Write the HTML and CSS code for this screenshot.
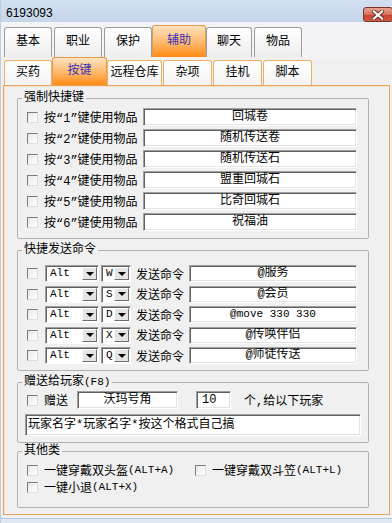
FILE: index.html
```html
<!DOCTYPE html>
<html lang="zh-CN">
<head>
    <meta charset="UTF-8">
    <meta name="viewport" content="width=device-width, initial-scale=1.0">
    <title>6193093</title>
    <link rel="stylesheet" href="styles.css">
</head>
<body>
<div class="window">
    <div class="titlebar">
        <span class="title">6193093</span>
        <span class="close">
            <svg width="12" height="10" viewBox="0 0 12 10">
                <path d="M2 1.5 L10 8.5 M10 1.5 L2 8.5" stroke="#6b2a22" stroke-width="4" stroke-linecap="square"/>
                <path d="M2 1.5 L10 8.5 M10 1.5 L2 8.5" stroke="#fff" stroke-width="2.2" stroke-linecap="square"/>
            </svg>
        </span>
    </div>

    <div class="tabs">
        <div class="tab">基本</div>
        <div class="tab">职业</div>
        <div class="tab">保护</div>
        <div class="tab active">辅助</div>
        <div class="tab">聊天</div>
        <div class="tab">物品</div>
    </div>

    <div class="subtabs">
        <div class="subtab first">买药</div>
        <div class="subtab active">按键</div>
        <div class="subtab wide">远程仓库</div>
        <div class="subtab">杂项</div>
        <div class="subtab">挂机</div>
        <div class="subtab">脚本</div>
    </div>

    <div class="panel">
        <!-- 强制快捷键 -->
        <fieldset class="group hotkeys">
            <legend>强制快捷键</legend>
            <div class="row"><span class="check"></span><span class="label">按“1”键使用物品</span><span class="field item">回城卷</span></div>
            <div class="row"><span class="check"></span><span class="label">按“2”键使用物品</span><span class="field item">随机传送卷</span></div>
            <div class="row"><span class="check"></span><span class="label">按“3”键使用物品</span><span class="field item">随机传送石</span></div>
            <div class="row"><span class="check"></span><span class="label">按“4”键使用物品</span><span class="field item">盟重回城石</span></div>
            <div class="row"><span class="check"></span><span class="label">按“5”键使用物品</span><span class="field item">比奇回城石</span></div>
            <div class="row"><span class="check"></span><span class="label">按“6”键使用物品</span><span class="field item">祝福油</span></div>
        </fieldset>

        <!-- 快捷发送命令 -->
        <fieldset class="group commands">
            <legend>快捷发送命令</legend>
            <div class="row">
                <span class="check"></span>
                <span class="combo mod">Alt<span class="drop"></span></span>
                <span class="combo key">W<span class="drop"></span></span>
                <span class="label-cmd">发送命令</span>
                <span class="field cmd">@服务</span>
            </div>
            <div class="row">
                <span class="check"></span>
                <span class="combo mod">Alt<span class="drop"></span></span>
                <span class="combo key">S<span class="drop"></span></span>
                <span class="label-cmd">发送命令</span>
                <span class="field cmd">@会员</span>
            </div>
            <div class="row">
                <span class="check"></span>
                <span class="combo mod">Alt<span class="drop"></span></span>
                <span class="combo key">D<span class="drop"></span></span>
                <span class="label-cmd">发送命令</span>
                <span class="field cmd small">@move 330 330</span>
            </div>
            <div class="row">
                <span class="check"></span>
                <span class="combo mod">Alt<span class="drop"></span></span>
                <span class="combo key">X<span class="drop"></span></span>
                <span class="label-cmd">发送命令</span>
                <span class="field cmd">@传唤伴侣</span>
            </div>
            <div class="row">
                <span class="check"></span>
                <span class="combo mod">Alt<span class="drop"></span></span>
                <span class="combo key">Q<span class="drop"></span></span>
                <span class="label-cmd">发送命令</span>
                <span class="field cmd">@师徒传送</span>
            </div>
        </fieldset>

        <!-- 赠送给玩家 -->
        <fieldset class="group gift">
            <legend>赠送给玩家<span class="en">(F8)</span></legend>
            <div class="row">
                <span class="check"></span>
                <span class="label-gift">赠送</span>
                <span class="field gift-item">沃玛号角</span>
                <span class="field gift-count">10</span>
                <span class="gift-tail">个,给以下玩家</span>
            </div>
            <div class="field players">玩家名字*玩家名字*按这个格式自己搞</div>
        </fieldset>

        <!-- 其他类 -->
        <fieldset class="group misc">
            <legend>其他类</legend>
            <div class="row options">
                <span class="option"><span class="check"></span>一键穿戴双头盔<span class="en">(ALT+A)</span></span>
                <span class="option"><span class="check"></span>一键穿戴双斗笠<span class="en">(ALT+L)</span></span>
            </div>
            <div class="row options">
                <span class="option"><span class="check"></span>一键小退<span class="en">(ALT+X)</span></span>
            </div>
        </fieldset>
    </div>
    <div class="frame-bottom"></div>
</div>
</body>
</html>
```

FILE: styles.css
```css
* {
    box-sizing: border-box;
}
body {
    margin: 0;
    background: #fff;
    font-family: "Liberation Mono", "Noto Sans CJK SC", monospace;
    font-size: 12px;
    color: #000;
}
.window {
    width: 392px;
    height: 523px;
    background: #f0f0f0;
    border-left: 1px solid #bfcde0;
    overflow: hidden;
}

/* title bar */
.titlebar {
    height: 22px;
    display: flex;
    justify-content: space-between;
    align-items: flex-start;
    background: linear-gradient(#d3e0f0, #c5d6eb);
}
.title {
    font-family: "Liberation Sans", sans-serif;
    font-size: 12px;
    line-height: 16px;
    padding: 5px 0 0 5px;
}
.close {
    width: 30px;
    height: 15px;
    margin-top: 7px;
    margin-right: -1px;
    border: 1px solid #7d3328;
    border-radius: 3px;
    background: linear-gradient(#e7a493, #d4705c 50%, #c2432f 51%, #cf5a43);
    display: flex;
    align-items: center;
    justify-content: center;
}

/* main tabs */
.tabs {
    height: 35px;
    display: flex;
    align-items: flex-end;
    padding-left: 3px;
    background: #f4f4f7;
}
.tab {
    width: 48px;
    height: 30px;
    margin-right: 2px;
    border: 1px solid #9c9c9c;
    border-bottom: none;
    border-radius: 3px 3px 0 0;
    background: linear-gradient(#ffffff, #ededed);
    line-height: 29px;
    text-align: center;
}
.tab.active {
    width: 54px;
    height: 32px;
    margin-left: -2px;
    margin-right: 0;
    border-color: #e49a4a;
    background: linear-gradient(#fde2c0, #fdb76a 55%, #ff8a12);
    color: #3a33b8;
    line-height: 30px;
}
.tab.active + .tab {
    width: 46px;
}

/* sub tabs */
.subtabs {
    height: 28px;
    display: flex;
    align-items: flex-end;
    padding-left: 3px;
}
.subtab {
    width: 49px;
    height: 25px;
    margin-left: 1px;
    border: 1px solid #efb063;
    border-bottom: none;
    border-radius: 3px 3px 0 0;
    background: linear-gradient(#ffffff, #f3f3f3);
    line-height: 25px;
    text-align: center;
}
.subtab.first {
    width: 48px;
    margin-left: 0;
}
.subtab.active {
    width: 55px;
    height: 28px;
    margin-left: 0;
    border-color: #e69c4c;
    background: linear-gradient(#fde2c0, #fdb76a 55%, #ff8a12);
    color: #3a33b8;
    line-height: 27px;
}
.subtab.wide {
    width: 55px;
    margin-left: 0;
}

/* content panel */
.panel {
    width: 387px;
    height: 430px;
    margin-left: 2px;
    padding: 5px 0 0 13px;
    border: 1px solid #e8a35c;
    box-shadow: inset 1px 1px 0 #fbe3c6;
    background: #f0f0f0;
}
.group {
    width: 352px;
    margin: 0;
    padding: 0;
    border: 1px solid #b2b2b2;
    border-radius: 2px;
}
.group legend {
    height: 14px;
    margin-left: 4px;
    padding: 0 2px;
    line-height: 14px;
}
.row {
    display: flex;
    align-items: center;
    padding-left: 9px;
}
.en {
    font-size: 11px;
}

.check {
    flex: none;
    width: 11px;
    height: 11px;
    margin-right: 6px;
    border-top: 1px solid #7c7c7c;
    border-left: 1px solid #7c7c7c;
    border-right: 1px solid #dcdcdc;
    border-bottom: 1px solid #dcdcdc;
    background: linear-gradient(135deg, #e8e8e8, #ffffff);
}

/* sunken edit box */
.field {
    display: block;
    height: 18px;
    border-top: 1px solid #a0a0a0;
    border-left: 1px solid #a0a0a0;
    border-right: 1px solid #fff;
    border-bottom: 1px solid #fff;
    box-shadow: inset 1px 1px 0 #606060, inset -1px -1px 0 #e3e3e3;
    background: #fff;
    line-height: 16px;
    text-align: center;
    white-space: nowrap;
    overflow: hidden;
}

/* 强制快捷键 */
.hotkeys {
    padding-top: 3px;
    padding-bottom: 7px;
}
.hotkeys .row {
    height: 18px;
    margin-bottom: 3px;
}
.hotkeys .row:last-child {
    margin-bottom: 0;
}
.label {
    width: 99px;
    flex: none;
}
.field.item {
    width: 214px;
}

/* 快捷发送命令 */
.commands {
    margin-top: 4px;
    padding-top: 8px;
    padding-bottom: 6px;
}
.commands .row {
    height: 17px;
    margin-bottom: 3.5px;
}
.commands .row:last-child {
    margin-bottom: 0;
}
.commands .check {
    margin-right: 7px;
}
.combo {
    position: relative;
    flex: none;
    height: 17px;
    padding-left: 4px;
    border-top: 1px solid #a0a0a0;
    border-left: 1px solid #a0a0a0;
    border-right: 1px solid #fff;
    border-bottom: 1px solid #fff;
    box-shadow: inset 1px 1px 0 #606060;
    background: #fff;
    font-size: 11px;
    line-height: 15px;
    display: flex;
    justify-content: space-between;
}
.combo.mod {
    width: 54px;
    margin-right: 2px;
}
.combo.key {
    width: 30px;
    margin-right: 5px;
}
.drop {
    width: 15px;
    height: 13px;
    margin: 1px 1px 0 0;
    border-top: 1px solid #fff;
    border-left: 1px solid #fff;
    border-right: 1px solid #6f6f6f;
    border-bottom: 1px solid #6f6f6f;
    background: #e4e4e4;
    display: flex;
    align-items: center;
    justify-content: center;
}
.drop::after {
    content: "";
    border-left: 4px solid transparent;
    border-right: 4px solid transparent;
    border-top: 4px solid #000;
}
.label-cmd {
    width: 48px;
    margin-right: 5px;
    flex: none;
}
.field.cmd {
    width: 168px;
    height: 17px;
    line-height: 15px;
}
.field.small {
    font-size: 11px;
}

/* 赠送给玩家 */
.gift {
    margin-top: 4px;
    padding-top: 2px;
    padding-bottom: 6px;
}
.gift .row {
    height: 18px;
}
.label-gift {
    width: 24px;
    margin-right: 9px;
}
.field.gift-item {
    width: 101px;
    margin-right: 18px;
}
.field.gift-count {
    width: 35px;
    margin-right: 13px;
    padding-left: 5px;
    text-align: left;
}
.field.players {
    width: 336px;
    height: 22px;
    margin: 5px 0 0 7px;
    padding-left: 2px;
    line-height: 20px;
    text-align: left;
}

/* 其他类 */
.misc {
    margin-top: 1px;
    padding-top: 4px;
    padding-bottom: 11px;
}
.options {
    height: 16px;
    margin-bottom: 1px;
}
.option {
    width: 168px;
    display: flex;
    align-items: center;
    white-space: nowrap;
}

.frame-bottom {
    height: 5px;
    margin-top: 3px;
    border-top: 1px solid #b7c9df;
    background: #dfe8f3;
}
```
